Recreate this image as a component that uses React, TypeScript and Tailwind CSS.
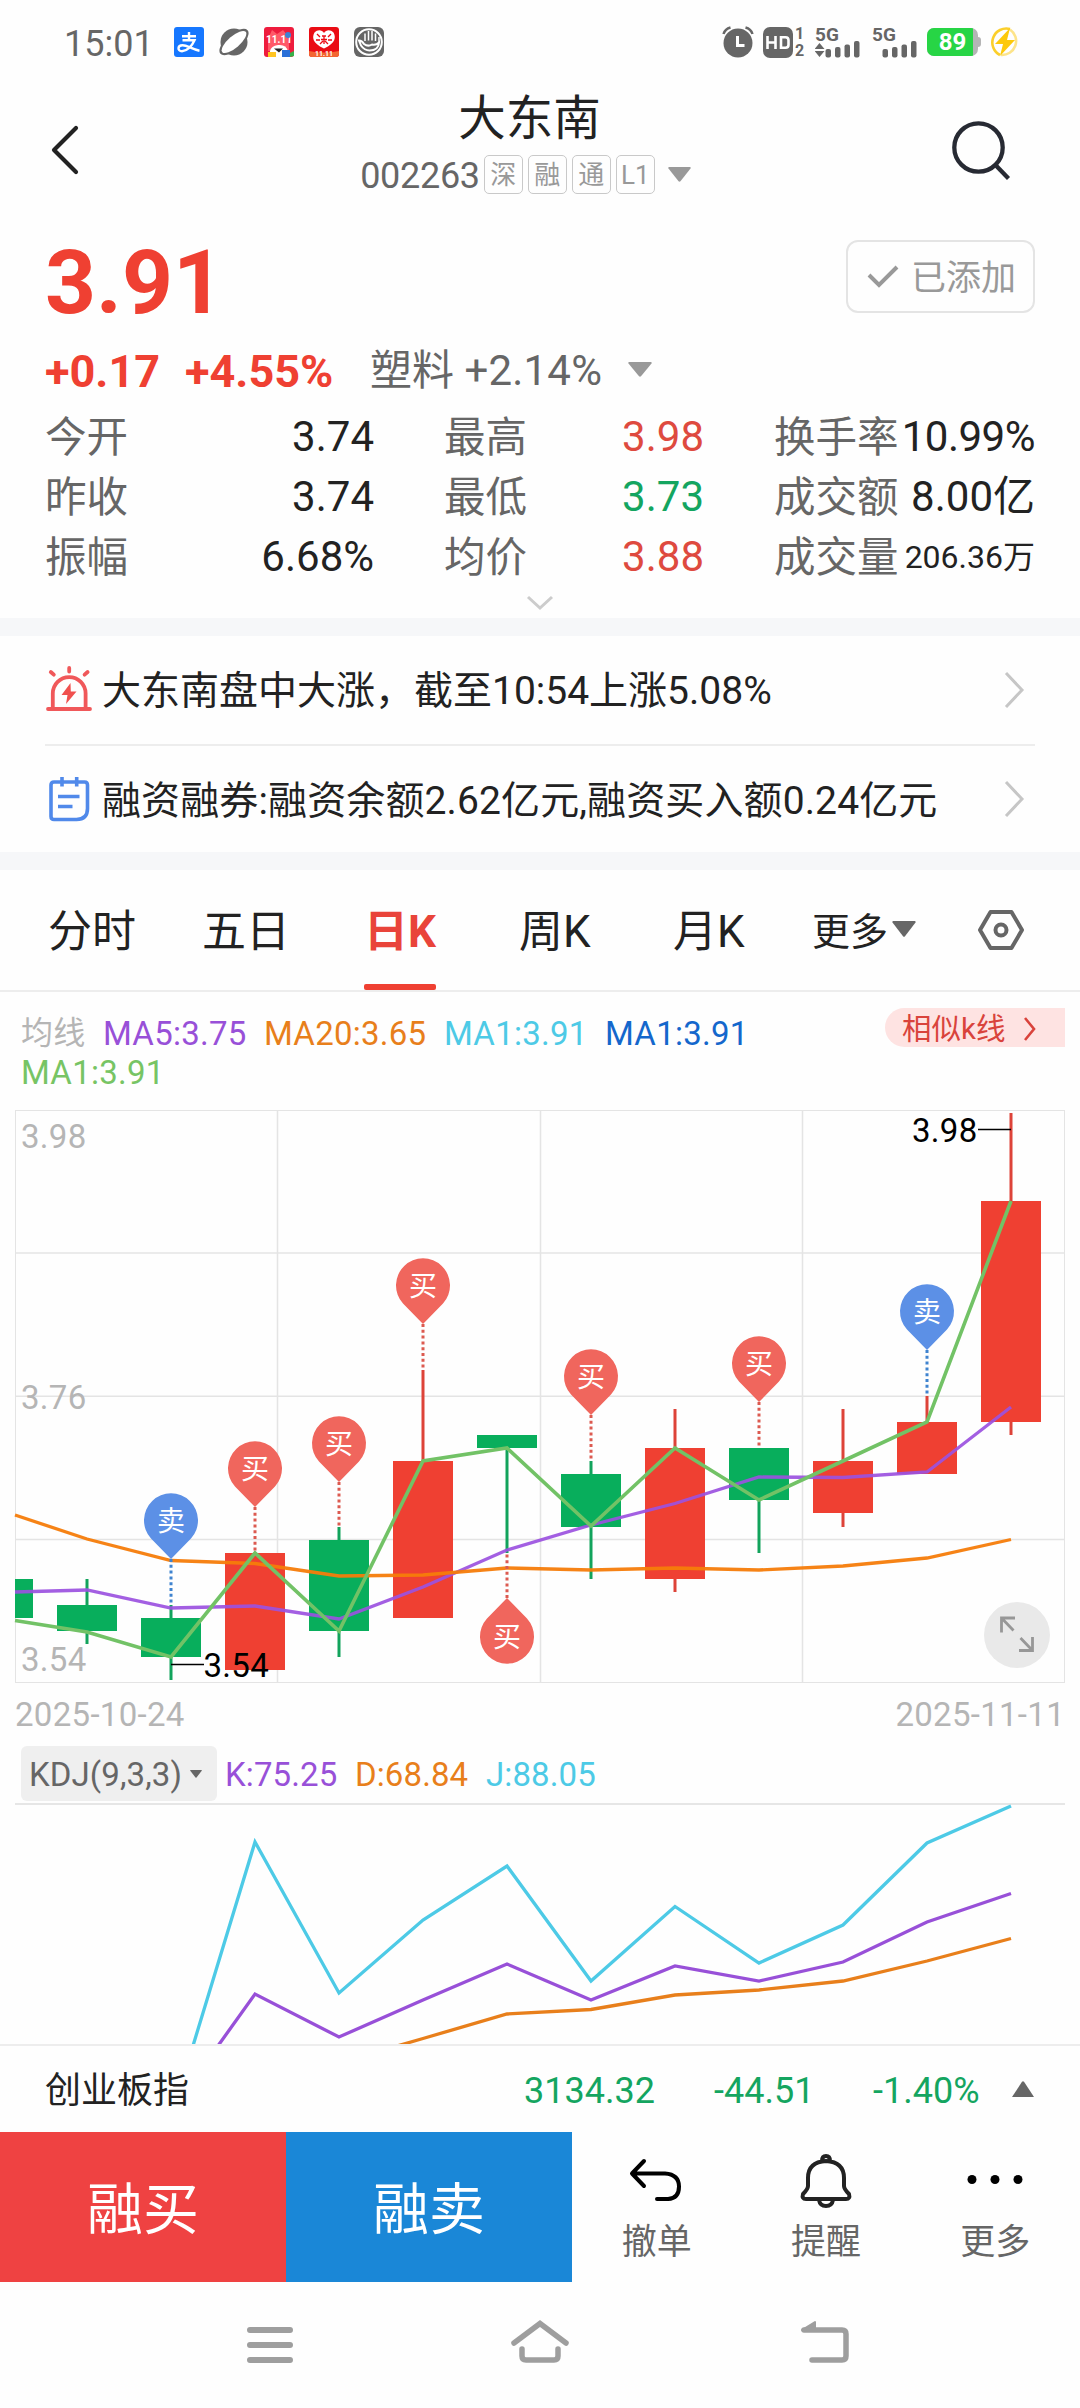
import React from "react";

const GREEN = "#08ae5c";
const RED = "#ef4032";

type Candle = { x: number; top: number; bottom: number; high: number; low: number; up: boolean };

const candles: Candle[] = [
  { x: 3, top: 1579, bottom: 1618, high: 1579, low: 1618, up: false },
  { x: 87, top: 1605, bottom: 1631, high: 1579, low: 1644, up: false },
  { x: 171, top: 1618, bottom: 1657, high: 1605, low: 1680, up: false },
  { x: 255, top: 1553, bottom: 1670, high: 1553, low: 1670, up: true },
  { x: 339, top: 1540, bottom: 1631, high: 1527, low: 1657, up: false },
  { x: 423, top: 1461, bottom: 1618, high: 1370, low: 1618, up: true },
  { x: 507, top: 1435, bottom: 1448, high: 1435, low: 1553, up: false },
  { x: 591, top: 1474, bottom: 1527, high: 1461, low: 1579, up: false },
  { x: 675, top: 1448, bottom: 1579, high: 1409, low: 1592, up: true },
  { x: 759, top: 1448, bottom: 1500, high: 1448, low: 1553, up: false },
  { x: 843, top: 1461, bottom: 1513, high: 1409, low: 1527, up: true },
  { x: 927, top: 1422, bottom: 1474, high: 1396, low: 1474, up: true },
  { x: 1011, top: 1201, bottom: 1422, high: 1113, low: 1435, up: true },
];

const ma1 = "15,1620.5 87,1632 171,1657 255,1553 339,1631 423,1461 507,1448 591,1526 675,1448 759,1500 843,1461 927,1422 1011,1201";
const ma5 = "15,1592 87,1590 171,1608 255,1606 339,1619 423,1587 507,1550 591,1525 675,1503.5 759,1477 843,1477.5 927,1472 1011,1407";
const ma20 = "15,1515 87,1539 171,1560.5 255,1563.5 339,1576 423,1575 507,1568 591,1570 675,1568 759,1570 843,1566 927,1558 1011,1539.5";

type Pin = { x: number; top: number; end: number; buy: boolean; below?: boolean };

const pins: Pin[] = [
  { x: 171, top: 1493, end: 1605, buy: false },
  { x: 255, top: 1441, end: 1552, buy: true },
  { x: 339, top: 1416, end: 1526, buy: true },
  { x: 423, top: 1258, end: 1369, buy: true },
  { x: 507, top: 1664, end: 1553, buy: true, below: true },
  { x: 591, top: 1349, end: 1461, buy: true },
  { x: 759, top: 1336, end: 1448, buy: true },
  { x: 927, top: 1284, end: 1396, buy: false },
];

function TradePin({ x, top, end, buy, below }: Pin) {
  const dir = below ? -1 : 1;
  return (
    <g>
      <line x1={x} x2={x} y1={top + 66 * dir} y2={end} stroke={buy ? "#dc5a50" : "#3f83cf"} strokeWidth="3" strokeDasharray="3 2.8" />
      <path
        transform={`translate(${x} ${top}) scale(1 ${dir})`}
        d="M0 66 L-20 45.500 A27 27 0 1 1 20 45.500 Z"
        fill={buy ? "#f0665d" : "#5c90e6"}
      />
      <text x={x} y={below ? top - 17 : top + 38} textAnchor="middle" fontSize="28" fill="#fff">
        {buy ? "买" : "卖"}
      </text>
    </g>
  );
}

function CandleChart() {
  return (
    <svg className="block h-[576px] w-full" viewBox="0 1108 1080 576">
      <g stroke="#e4e4e4" strokeWidth="1.5">
        {[1253, 1396.3, 1539.5].map((y) => (
          <line key={y} x1="15" x2="1065" y1={y} y2={y} />
        ))}
        {[277.5, 540.5, 802.5].map((x) => (
          <line key={x} x1={x} x2={x} y1="1110" y2="1683" />
        ))}
        <rect x="15.5" y="1110.5" width="1049" height="572" fill="none" strokeWidth="1" />
      </g>
      <g fontSize="33" fill="#b5b5b5" letterSpacing="0.3">
        <text x="21" y="1148">3.98</text>
        <text x="21" y="1409">3.76</text>
        <text x="21" y="1671">3.54</text>
      </g>
      <clipPath id="plot"><rect x="15" y="1108" width="1050" height="576" /></clipPath>
      <g clipPath="url(#plot)">
        {candles.map((c) => (
          <g key={c.x} fill={c.up ? RED : GREEN}>
            <rect x={c.x - 1.5} y={c.high} width="3" height={c.low - c.high} fill={c.up ? "#dd4339" : "#12a35c"} />
            <rect x={c.x - 30} y={c.top} width="60" height={c.bottom - c.top} />
          </g>
        ))}
      </g>
      <g fill="none" strokeWidth="3.3">
        <polyline points={ma5} stroke="#9b51e0" opacity="0.92" />
        <polyline points={ma20} stroke="#f57c0a" opacity="0.95" />
        <polyline points={ma1} stroke="#72c266" strokeWidth="3.6" />
      </g>
      {pins.map((p) => (
        <TradePin key={p.x} {...p} />
      ))}
      <g stroke="#000" strokeWidth="1.5">
        <line x1="171" x2="204" y1="1664.5" y2="1664.5" />
        <line x1="978" x2="1011" y1="1129.5" y2="1129.5" />
      </g>
      <g fontSize="33" fill="#000" letterSpacing="0.3">
        <text x="203.5" y="1677">3.54</text>
        <text x="912" y="1142">3.98</text>
      </g>
      <circle cx="1017" cy="1635" r="33" fill="#e9e9e9" />
      <path
        d="M1001.500 1632.500V1618H1015M1002 1618.500l11.500 12M1032.500 1637v13.500H1019M1032 1650l-11.500-12"
        fill="none" stroke="#979797" strokeWidth="2.8"
      />
    </svg>
  );
}

function KdjChart() {
  return (
    <svg className="block h-[241px] w-full" viewBox="0 1803 1080 241" fill="none" strokeWidth="3.3">
      <polyline stroke="#e87f1b" points="390,2048 423,2038.5 507,2014 591,2009.5 675,1995 759,1990 843,1981 927,1961 1011,1938.5" />
      <polyline stroke="#9850d8" points="215,2050 255,1994 339,2037 423,2000 507,1964 591,2000 675,1966 759,1981 843,1962 927,1922 1011,1893.5" />
      <polyline stroke="#4dcae6" points="192,2049 255,1842 339,1993 423,1920 507,1866 591,1981 675,1906.5 759,1963 843,1925 927,1843 1011,1806" />
    </svg>
  );
}

function Triangle({ className = "", up = false }: { className?: string; up?: boolean }) {
  return (
    <svg className={className} viewBox="0 0 24 16" preserveAspectRatio="none">
      <path d={up ? "M1 16h22L13 .8q-1-1-2 0z" : "M1 0h22q1 .5.500 1.500L13 15.200q-1 1-2 0L.5 1.500Q0 .5 1 0z"} fill="currentColor" />
    </svg>
  );
}

function Bars({ arrows = false }: { arrows?: boolean }) {
  return (
    <div className="flex h-[31px] w-[46px] flex-col text-[#666]">
      <span className="h-[14px] text-[19px] font-bold leading-[15px]">5G</span>
      <svg className="h-[17px] w-[46px]" viewBox="0 14 46 17" fill="#666">
        {arrows && <path d="M4.500 16l5 6h-10zM4.500 30l5-6h-10z" />}
        <rect x="10.5" y="22" width="5.5" height="8.5" rx="2" />
        <rect x="20" y="20" width="5.5" height="10.5" rx="2" />
        <rect x="29.5" y="17.5" width="5.5" height="13" rx="2" />
        <rect x="39" y="14" width="5.5" height="16.5" rx="2" />
      </svg>
    </div>
  );
}

function StatusBar() {
  return (
    <div className="flex h-[84px] items-center pl-[64px] pr-[60px]">
      <span className="w-[110px] pt-[4px] text-[36px] leading-none text-[#666]">15:01</span>
      <div className="flex gap-[15px]">
        <svg className="size-[30px]" viewBox="0 0 30 30">
          <rect width="30" height="30" rx="3" fill="#1677ff" />
          <path d="M8 9.200h14M15 5v8M8.500 13.200h12C18 19 13 24.200 8 24.200c-5 0-4.500-6 .5-6 5 0 9 4 17 5.500" fill="none" stroke="#fff" strokeWidth="2.4" />
        </svg>
        <svg className="size-[30px]" viewBox="0 0 30 30">
          <circle cx="15" cy="15" r="13.5" fill="#666" />
          <ellipse cx="15" cy="15" rx="18" ry="8" transform="rotate(-41 15 15)" fill="#666" />
          <ellipse cx="15" cy="15" rx="15.5" ry="5.8" transform="rotate(-41 15 15)" fill="#fff" />
        </svg>
        <svg className="size-[30px]" viewBox="0 0 30 30">
          <rect width="30" height="30" rx="3" fill="#ee1c3d" />
          <path d="M4 24V12L8 3l5 4 6-4 4 5 2 7v9z" fill="#ff5968" />
          <text x="15" y="16" textAnchor="middle" fontSize="10" fontWeight="700" fill="#fff">11.11</text>
          <path d="M6 30v-6q1-5 8-6 8-1 10 6v6z" fill="#fff" />
          <path d="M10 21.500h9l-4 4z" fill="#222" />
          <path d="M4 25h8v5H4z" fill="#ffc421" />
          <path d="M18 23h8v7h-8z" fill="#2a70d8" />
          <path d="M26 26l4-2v5l-4 1z" fill="#35b24a" />
          <circle cx="24" cy="8" r="3" fill="#3c82d4" />
        </svg>
        <svg className="size-[30px]" viewBox="0 0 30 30">
          <rect width="30" height="30" rx="3" fill="#ea0c14" />
          <path d="M0 24q15 3 30 0v3q0 3-3 3H3q-3 0-3-3z" fill="#f36632" />
          <path d="M15 21.500C3 16 3 10 5.500 5.500 9 2 13 3 15 6c2-3 6-4 9.500-.5C27 10 27 16 15 21.500z" fill="#fff" />
          <path d="M8 7l3 3M22 7l-3 3M7 13h4M19 13h4M13 9h4M12 12.500h6M15 9v8M11 17l3-3M19 17l-3-3" stroke="#ea0c14" strokeWidth="1.3" />
          <text x="15" y="29" textAnchor="middle" fontSize="7" fontWeight="700" fill="#fff">11.11</text>
        </svg>
        <svg className="size-[30px]" viewBox="0 0 30 30" fill="none" stroke="#fff">
          <rect width="30" height="30" rx="6" fill="#666" stroke="none" />
          <circle cx="15" cy="15" r="12.8" strokeWidth="2" />
          <path d="M11 14V6.500M14.500 13.500V4M18 13.500V4M21.500 14V6.500M25 16v-6" strokeWidth="1.5" />
          <path d="M5 13.500q3 0 5 3.500 4 3 8 .5 4 1 7-2-.5 8-9.500 8-5 0-8.500-5z" fill="#666" strokeWidth="2" />
        </svg>
      </div>
      <div className="ml-auto flex items-center">
        <svg className="mr-[9px] size-[32px]" viewBox="0 0 32 32">
          <circle cx="16" cy="17" r="14.5" fill="#666" />
          <path d="M1.500 8Q3 3 8.500 1.500M30.500 8Q29 3 23.500 1.500" stroke="#666" strokeWidth="2.5" fill="none" />
          <path d="M15.500 10v9.500h7" stroke="#fff" strokeWidth="3" fill="none" />
        </svg>
        <svg className="h-[31px] w-[30px]" viewBox="0 0 30 31">
          <rect width="30" height="31" rx="7" fill="#666" />
          <path d="M4.500 9v13M12.500 9v13M4.500 15.500h8M18 10.300h4.500q3 0 3 3v4.400q0 3-3 3H18z" fill="none" stroke="#fff" strokeWidth="2.6" />
        </svg>
        <div className="ml-[2px] mr-[9px] flex h-[34px] w-[11px] flex-col text-[16px] font-bold leading-[17px] text-[#666]">
          <span>1</span>
          <span>2</span>
        </div>
        <Bars arrows />
        <div className="ml-[11px]"><Bars /></div>
        <div className="ml-[9px] flex h-[28px] w-[54px] items-center">
          <div className="flex h-full w-[51px] overflow-hidden rounded-[7px] bg-[#b5b5b5]">
            <div className="h-full w-[46px] bg-[#27d545] pl-[5px] text-center text-[24px] font-bold leading-[28px] text-white">89</div>
          </div>
          <div className="h-[10px] w-[3px] rounded-r bg-[#b5b5b5]" />
        </div>
        <svg className="ml-[9px] size-[30px]" viewBox="0 0 30 30" fill="none">
          <path d="M10 28A14 14 0 0 1 20 2" stroke="#fbcf2c" strokeWidth="2.6" />
          <path d="M20 2.500A14 14 0 0 1 11 28" stroke="#fde48a" strokeWidth="2.6" />
          <path d="M20 1L5 17h8L10 29 25 13h-8z" fill="#fdc90a" />
        </svg>
      </div>
    </div>
  );
}

function Header() {
  return (
    <div className="flex h-[134px] items-start justify-between pl-[50px] pr-[68px]">
      <svg className="mt-[40px] h-[52px] w-[30px]" viewBox="0 0 30 52" fill="none" stroke="#222" strokeWidth="4.2" strokeLinecap="round">
        <path d="M26 4L4 26l22 22" strokeLinejoin="round" />
      </svg>
      <div className="ml-[19px] flex flex-col items-center">
        <div className="pl-[8px] pt-[3px] text-[47.5px] leading-[64px] text-[#222]">大东南</div>
        <div className="flex h-[40px] items-center gap-[5px] pt-[7px]">
          <span className="-mr-[1px] pt-[2px] text-[36px] leading-none tracking-[-0.3px] text-[#666]">002263</span>
          {["深", "融", "通", "L1"].map((t) => (
            <span key={t} className="flex h-[39px] w-[39px] items-center justify-center rounded-[5px] border-[1.5px] border-[#c9c9c9] pt-[1px] text-[26px] leading-none text-[#999]">
              {t}
            </span>
          ))}
          <Triangle className="-mt-[1px] ml-[8px] h-[15px] w-[23px] text-[#999]" />
        </div>
      </div>
      <svg className="mt-[36px] h-[62px] w-[60px]" viewBox="0 0 60 62" fill="none" stroke="#272a33" strokeWidth="4.3">
        <circle cx="26.5" cy="27.5" r="24.2" />
        <path d="M43 44.500L56.500 58.500" />
      </svg>
    </div>
  );
}

const stats: { label: string; value: string; color?: string; size?: string }[][] = [
  [{ label: "今开", value: "3.74" }, { label: "最高", value: "3.98", color: "text-[#de4a3f]" }, { label: "换手率", value: "10.99%", size: "tracking-[-0.5px]" }],
  [{ label: "昨收", value: "3.74" }, { label: "最低", value: "3.73", color: "text-[#14a560]" }, { label: "成交额", value: "8.00亿" }],
  [{ label: "振幅", value: "6.68%" }, { label: "均价", value: "3.88", color: "text-[#de4a3f]" }, { label: "成交量", value: "206.36万", size: "text-[32px]" }],
];

function Quote() {
  return (
    <div className="h-[400px] px-[45px]">
      <div className="flex h-[116px] items-start justify-between">
        <div className="pt-[20px] text-[89px] font-bold leading-[90px] text-[#ef4032]">3.91</div>
        <div className="mt-[22px] flex h-[73px] w-[189px] items-center rounded-[12px] border-2 border-[#e4e4e4] pl-[18px] text-[35px] text-[#999]">
          <svg className="mr-[11px] h-[26px] w-[34px]" viewBox="0 0 34 26" fill="none" stroke="#999" strokeWidth="4">
            <path d="M3 11l10 10L31 3" />
          </svg>
          <span className="pt-[5px]">已添加</span>
        </div>
      </div>
      <div className="flex h-[72px] items-center pt-[2px] text-[42px] leading-none">
        <span className="w-[140px] text-[45px] font-bold text-[#ef4032]">+0.17</span>
        <span className="w-[185px] text-[45px] font-bold text-[#ef4032]">+4.55%</span>
        <span className="text-[#666]">塑料 <span className="tracking-[0.2px]">+2.14%</span></span>
        <Triangle className="-mt-[4px] ml-[26px] h-[15px] w-[24px] text-[#999]" />
      </div>
      <div className="flex flex-col pt-[1px]">
        {stats.map((row) => (
          <div key={row[0].label} className="grid h-[60px] grid-cols-[329px_260px_261px] items-center justify-between text-[42px] leading-none">
            {row.map((s) => (
              <div key={s.label} className="flex items-center justify-between whitespace-nowrap">
                <span className="pt-[2px] text-[41.5px] text-[#666]">{s.label}</span>
                <span className={`${s.size ?? ""} ${s.color ?? "text-[#222]"}`}>{s.value}</span>
              </div>
            ))}
          </div>
        ))}
      </div>
      <svg className="mx-auto mt-[8px] h-[16px] w-[28px]" viewBox="0 0 28 16" fill="none" stroke="#ccc" strokeWidth="3">
        <path d="M2 2l12 11L26 2" />
      </svg>
    </div>
  );
}

function Arrow() {
  return (
    <svg className="ml-auto mr-[10px] h-[38px] w-[22px]" viewBox="0 0 22 38" fill="none" stroke="#c6c6c6" strokeWidth="3">
      <path d="M3 2l16 17L3 36" />
    </svg>
  );
}

function News() {
  return (
    <div className="flex flex-col px-[45px] text-[39px] text-[#222]">
      <div className="flex h-[110px] items-center border-b-2 border-[#ededed]">
        <svg className="-mt-[2px] mr-[9px] h-[48px] w-[48px]" viewBox="0 0 48 48" fill="none" stroke="#f0585a" strokeWidth="3.8" strokeLinecap="round">
          <path d="M3 44h42M7.800 43V28.500a16.400 16.400 0 0 1 32.800 0V43M24.200 3v3.500M5.800 7l3 2.700M42.600 7l-3 2.700" />
          <path d="M25.500 18L16.500 30h6l-1.500 9 10.500-12.500H25.800z" fill="#f0504e" stroke="none" />
        </svg>
        <span className="pt-[3px]">大东南盘中大涨，截至10:54上涨5.08%</span>
        <Arrow />
      </div>
      <div className="flex h-[106px] items-center">
        <svg className="mr-[9px] h-[48px] w-[48px]" viewBox="0 0 48 48" fill="none" stroke="#5089ea" strokeWidth="3.6">
          <path d="M9 7h30.500q3 0 3 3v23.500q0 11-11 11H9q-3 0-3-3V10q0-3 3-3zM17 2v9.500M31.700 2v9.500M13 21.500h21.500M13 31.500h14.500" strokeLinejoin="round" />
        </svg>
        <span className="pt-[4px] tracking-[0.12px]">融资融券:融资余额2.62亿元,融资买入额0.24亿元</span>
        <Arrow />
      </div>
    </div>
  );
}

function Tabs() {
  return (
    <div className="flex h-[122px] items-center border-b-2 border-[#ededed] pl-[48px] text-[44px] text-[#222]">
      <span className="w-[154px] pt-[3px]">分时</span>
      <span className="w-[162px] pt-[3px]">五日</span>
      <div className="relative flex h-full w-[155px] items-center pt-[3px] font-bold text-[#e9443a]">
        日K
        <div className="absolute bottom-0 left-0 h-[6px] w-[72px] rounded-[2px] bg-[#ef4032]" />
      </div>
      <span className="w-[154px] pt-[3px]">周K</span>
      <span className="w-[139px] pt-[3px]">月K</span>
      <span className="pt-[4px] text-[38px]">更多</span>
      <Triangle className="-mt-[2px] ml-[4px] h-[16px] w-[24px] text-[#666]" />
      <svg className="ml-[61px] h-[42px] w-[48px]" viewBox="0 0 48 42" fill="none" stroke="#666" strokeWidth="4">
        <path d="M13.500 3h21L45 21 34.500 39h-21L3 21z" strokeLinejoin="round" />
        <circle cx="24" cy="21" r="5.5" />
      </svg>
    </div>
  );
}

function Averages() {
  return (
    <div className="flex h-[116px] items-start justify-between pl-[21px] pr-[15px]">
      <div className="flex flex-col pt-[22px] text-[33px] leading-[39px] tracking-[0.25px]">
        <div className="flex">
          <span className="w-[82px] text-[32px] text-[#b5b5b5]">均线</span>
          <span className="w-[161px] text-[#9850d8]">MA5:3.75</span>
          <span className="w-[180px] text-[#e87f1b]">MA20:3.65</span>
          <span className="w-[161px] text-[#4dcae6]">MA1:3.91</span>
          <span className="text-[#1467cc]">MA1:3.91</span>
        </div>
        <span className="text-[#77c464]">MA1:3.91</span>
      </div>
      <div className="mt-[16px] flex h-[39px] w-[180px] items-center rounded-l-full bg-[#fee3e2] pl-[17px] text-[29.5px] leading-none text-[#d9433c]">
        <span className="pt-[4px]">相似k线</span>
        <svg className="ml-[19px] mt-[3px] h-[24px] w-[12px]" viewBox="0 0 12 24" fill="none" stroke="#d9433c" strokeWidth="2.6">
          <path d="M1 1l9 11-9 11" />
        </svg>
      </div>
    </div>
  );
}

function Actions() {
  return (
    <div className="flex h-[150px]">
      <div className="flex w-[286px] items-center justify-center bg-[#ef4242] pt-[5px] text-[56px] text-white">融买</div>
      <div className="flex w-[286px] items-center justify-center bg-[#1a87d7] pt-[5px] text-[56px] text-white">融卖</div>
      <div className="grid flex-1 grid-cols-3 text-[35px] leading-[44px] text-[#666]">
        <div className="flex flex-col items-center pt-[18px]">
          <svg className="mb-[3px] h-[68px] w-[60px]" viewBox="0 0 60 68" fill="none" stroke="#000" strokeWidth="4" strokeLinecap="round" strokeLinejoin="round">
            <path d="M17 11L5 23.500 17 36M6 23.500h32q14 1 14 13T41 49H30" />
          </svg>
          撤单
        </div>
        <div className="flex flex-col items-center pt-[18px]">
          <svg className="mb-[3px] h-[68px] w-[60px]" viewBox="0 0 60 68" fill="none" stroke="#222" strokeWidth="4" strokeLinejoin="round">
            <path d="M12 36V28q0-16 18-17 18 1 18 17v8q0 3 5 8 1.500 5-3 5H10q-4.500 0-3-5 5-5 5-8zM26 11q0-5 4-5t4 5M23 50q1 6 7 6t7-6" />
          </svg>
          提醒
        </div>
        <div className="flex flex-col items-center pt-[18px]">
          <svg className="mb-[3px] h-[68px] w-[60px]" viewBox="0 0 60 68">
            <circle cx="7" cy="29.5" r="4.5" />
            <circle cx="30" cy="29.5" r="4.5" />
            <circle cx="53" cy="29.5" r="4.5" />
          </svg>
          更多
        </div>
      </div>
    </div>
  );
}

function NavBar() {
  return (
    <div className="flex h-[126px] items-center pl-[240px]">
      <svg className="h-[60px] w-[60px]" viewBox="0 0 60 60" stroke="#9e9e9e" strokeWidth="6" strokeLinecap="round">
        <path d="M10 15h40M10 30h40M10 45h40" />
      </svg>
      <svg className="ml-[210px] h-[60px] w-[60px]" viewBox="0 0 60 60" fill="none" stroke="#9e9e9e" strokeWidth="5.5" strokeLinecap="round">
        <path d="M4 28L30 8.500 56 28M12 34v7q0 4 4 4h28q4 0 4-4v-7" />
      </svg>
      <svg className="ml-[228px] h-[60px] w-[60px]" viewBox="0 0 60 60" fill="none" stroke="#9e9e9e" strokeWidth="5.5">
        <path d="M6 15h38q4 0 4 4v22q0 4-4 4H14" strokeLinecap="round" />
        <path d="M4 15l13-8v8z" fill="#9e9e9e" strokeWidth="2" strokeLinejoin="round" />
      </svg>
    </div>
  );
}

export default function App() {
  return (
    <div className="flex h-[2408px] w-[1080px] flex-col overflow-hidden bg-[#fefefe] font-['Roboto','Noto_Sans_CJK_SC',sans-serif]">
      <StatusBar />
      <Header />
      <Quote />
      <div className="h-[18px] bg-[#f6f7f9]" />
      <News />
      <div className="h-[18px] bg-[#f6f7f9]" />
      <Tabs />
      <Averages />
      <CandleChart />
      <div className="flex h-[60px] items-center justify-between px-[15px] text-[33px] leading-none tracking-[0.3px] text-[#b5b5b5]">
        <span>2025-10-24</span>
        <span>2025-11-11</span>
      </div>
      <div className="mt-[2px] flex h-[57px] items-start pl-[21px] text-[33px] leading-none tracking-[0.1px]">
        <div className="mr-[8px] flex h-[55px] w-[196px] items-center rounded-[6px] bg-[#efefef] pl-[8px] text-[#666]">
          <span className="pt-[2px]">KDJ(9,3,3)</span>
          <Triangle className="ml-[8px] h-[8px] w-[12px]" />
        </div>
        <span className="flex h-[57px] w-[130px] items-center text-[#9850d8]">K:75.25</span>
        <span className="flex h-[57px] w-[131px] items-center text-[#e87f1b]">D:68.84</span>
        <span className="flex h-[57px] items-center text-[#4dcae6]">J:88.05</span>
      </div>
      <div className="mx-[15px] -mb-[2px] h-[2px] bg-[#e6e6e6]" />
      <KdjChart />
      <div className="flex h-[88px] items-center border-t-2 border-[#ededed] px-[45px] text-[36px] leading-none">
        <span className="w-[479px] pt-[3px] text-[#222]">创业板指</span>
        <span className="w-[190px] pt-[3px] text-[#14a560]">3134.32</span>
        <span className="w-[159px] pt-[3px] text-[#14a560]">-44.51</span>
        <span className="pt-[3px] text-[#14a560]">-1.40%</span>
        <Triangle up className="ml-auto h-[16px] w-[24px] text-[#666]" />
      </div>
      <Actions />
      <NavBar />
    </div>
  );
}
